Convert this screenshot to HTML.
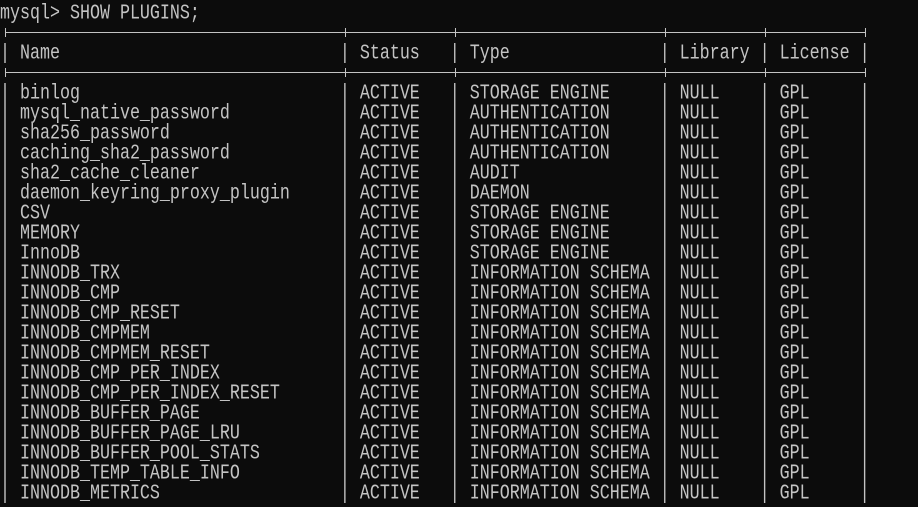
<!DOCTYPE html>
<html><head><meta charset="utf-8">
<style>
html,body{margin:0;padding:0;background:#0c0c0c;width:918px;height:486px;overflow:hidden}
#t{position:absolute;left:0;top:5px}
.l{height:20px;line-height:20px;white-space:pre;font-family:"Liberation Mono",monospace;font-size:16.67px;color:#c4c4c4;transform:scaleY(1.25);transform-origin:50% 55%;}
.s{color:transparent}
.h{position:absolute;left:5px;width:861px;height:1px;background:#c4c4c4}
.v{position:absolute;width:1px;height:9px;background:#c4c4c4}
</style></head><body>
<div id="t"></div>
<div id="o"></div>
<script>
var rows=[
["binlog","ACTIVE","STORAGE ENGINE"],
["mysql_native_password","ACTIVE","AUTHENTICATION"],
["sha256_password","ACTIVE","AUTHENTICATION"],
["caching_sha2_password","ACTIVE","AUTHENTICATION"],
["sha2_cache_cleaner","ACTIVE","AUDIT"],
["daemon_keyring_proxy_plugin","ACTIVE","DAEMON"],
["CSV","ACTIVE","STORAGE ENGINE"],
["MEMORY","ACTIVE","STORAGE ENGINE"],
["InnoDB","ACTIVE","STORAGE ENGINE"],
["INNODB_TRX","ACTIVE","INFORMATION SCHEMA"],
["INNODB_CMP","ACTIVE","INFORMATION SCHEMA"],
["INNODB_CMP_RESET","ACTIVE","INFORMATION SCHEMA"],
["INNODB_CMPMEM","ACTIVE","INFORMATION SCHEMA"],
["INNODB_CMPMEM_RESET","ACTIVE","INFORMATION SCHEMA"],
["INNODB_CMP_PER_INDEX","ACTIVE","INFORMATION SCHEMA"],
["INNODB_CMP_PER_INDEX_RESET","ACTIVE","INFORMATION SCHEMA"],
["INNODB_BUFFER_PAGE","ACTIVE","INFORMATION SCHEMA"],
["INNODB_BUFFER_PAGE_LRU","ACTIVE","INFORMATION SCHEMA"],
["INNODB_BUFFER_POOL_STATS","ACTIVE","INFORMATION SCHEMA"],
["INNODB_TEMP_TABLE_INFO","ACTIVE","INFORMATION SCHEMA"],
["INNODB_METRICS","ACTIVE","INFORMATION SCHEMA"]
];
function p(s,n){while(s.length<n)s+=" ";return s;}
function d(n){return new Array(n+1).join("-");}
var sep="+"+d(33)+"+"+d(10)+"+"+d(20)+"+"+d(9)+"+"+d(9)+"+";
function r(a,b,c,e,f){return "| "+p(a,31)+" | "+p(b,8)+" | "+p(c,18)+" | "+p(e,7)+" | "+p(f,7)+" |";}
var t=document.getElementById("t");
function add(s,isSep){var dv=document.createElement("div");dv.className="l"+(isSep?" s":"");dv.textContent=s;t.appendChild(dv);}
add("mysql> SHOW PLUGINS;");add(sep,1);add(r("Name","Status","Type","Library","License"));add(sep,1);
rows.forEach(function(x){add(r(x[0],x[1],x[2],"NULL","GPL"));});
var o=document.getElementById("o"),h="";
[32,72].forEach(function(y){h+='<div class="h" style="top:'+y+'px"></div>';
[5,345,455,665,765,865].forEach(function(x){h+='<div class="v" style="left:'+x+'px;top:'+(y-4)+'px"></div>';});});
o.innerHTML=h;
</script>
</body></html>
